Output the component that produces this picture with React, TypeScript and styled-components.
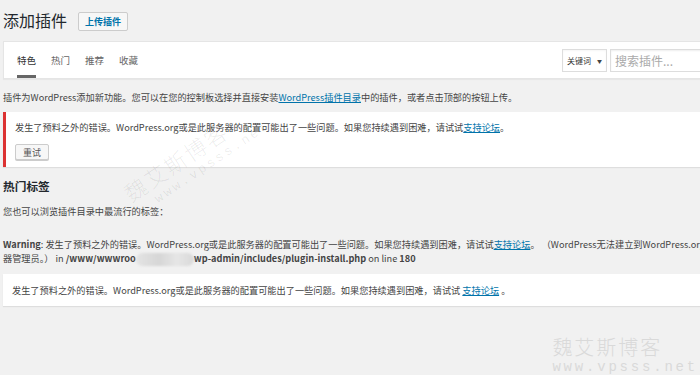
import styled, { createGlobalStyle } from "styled-components";

const GlobalStyle = createGlobalStyle`
  html, body {
    margin: 0;
    padding: 0;
    background: #f1f1f1;
  }
  body {
    font-family: "Noto Sans CJK SC", "Noto Sans", sans-serif;
    color: #444;
    font-size: 9.2px;
  }
  * { box-sizing: border-box; }
`;

const Page = styled.div`
  position: relative;
  width: 700px;
  height: 375px;
  overflow: hidden;
  padding-left: 3px;
`;

const Header = styled.div`
  display: flex;
  align-items: center;
  gap: 11px;
  height: 41px;
`;

const Title = styled.h1`
  margin: 0 0 1px;
  font-size: 16px;
  font-weight: 400;
  color: #23282d;
  line-height: 1;
`;

const UploadButton = styled.button`
  height: 19px;
  padding: 0 6px;
  border: 1px solid #ccc;
  border-radius: 2px;
  background: #f7f7f7;
  color: #0073aa;
  font-family: inherit;
  font-size: 9px;
  font-weight: 700;
  margin-top: 1px;
`;

const FilterBar = styled.div`
  display: flex;
  align-items: stretch;
  justify-content: space-between;
  height: 38px;
  margin-right: -20px;
  background: #fff;
  border: 1px solid #e5e5e5;
  box-shadow: 0 1px 1px rgba(0, 0, 0, 0.04);
`;

const Tabs = styled.ul`
  display: flex;
  gap: 15px;
  margin: 0;
  padding: 0 0 0 13px;
  list-style: none;
`;

const Tab = styled.li<{ $active?: boolean }>`
  display: flex;
  align-items: center;
  padding-top: 2px;
  font-size: 9.5px;
  color: ${(p) => (p.$active ? "#333" : "#666")};
  border-bottom: 3px solid ${(p) => (p.$active ? "#666" : "transparent")};
`;

const Search = styled.div`
  display: flex;
  align-items: center;
  gap: 3px;
`;

const Select = styled.div`
  display: flex;
  align-items: center;
  justify-content: space-between;
  height: 23px;
  width: 45px;
  padding: 0 4px 0 4px;
  border: 1px solid #ddd;
  font-size: 8px;
  color: #333;
  white-space: nowrap;
  box-shadow: inset 0 1px 2px rgba(0, 0, 0, 0.04);
`;

const Arrow = styled.span`
  font-size: 5px;
  color: #444;
`;

const SearchInput = styled.input`
  width: 109px;
  height: 23px;
  border: 1px solid #ddd;
  padding: 0 4px;
  font-family: inherit;
  font-size: 12px;
  box-shadow: inset 0 1px 2px rgba(0, 0, 0, 0.07);
  &::placeholder {
    color: #aaa;
  }
`;

const Text = styled.p`
  margin: 0;
  line-height: 14px;
  white-space: nowrap;
`;

const Intro = styled(Text)`
  margin-top: 11px;
`;

const Link = styled.a`
  color: #0073aa;
  text-decoration: underline;
`;

const Notice = styled.div<{ $error?: boolean }>`
  margin-right: -20px;
  background: #fff;
  border-left: ${(p) => (p.$error ? "3px solid #dc3232" : "none")};
  box-shadow: 0 1px 1px rgba(0, 0, 0, 0.08);
  padding: ${(p) => (p.$error ? "8px 0 7px 9px" : "9px 0 9px 9px")};
`;

const ErrorNotice = styled(Notice)`
  margin-top: 8px;
`;

const RetryButton = styled.button`
  margin-top: 10px;
  height: 16px;
  width: 34px;
  padding: 0;
  border: 1px solid #ccc;
  border-radius: 2px;
  background: #f7f7f7;
  color: #555;
  font-family: inherit;
  font-size: 9px;
  box-shadow: 0 1px 0 #ccc;
`;

const Heading = styled.h2`
  margin: 12px 0 0;
  font-size: 11.7px;
  font-weight: 700;
  color: #23282d;
  line-height: 14px;
`;

const TagHint = styled(Text)`
  margin-top: 11px;
`;

const Warning = styled.div`
  margin-top: 20px;
  line-height: 13.5px;
  color: #444;
  white-space: nowrap;
`;

const Blur = styled.span`
  display: inline-block;
  width: 58px;
  height: 13px;
  vertical-align: middle;
  border-radius: 7px;
  background: linear-gradient(90deg, #e4e4e4, #d6d6d6 40%, #e6e6e6 70%, #d9d9d9);
  filter: blur(1px);
`;

const BottomNotice = styled(Notice)`
  margin-top: 8px;
`;

const Watermark = styled.div`
  position: absolute;
  right: 2px;
  bottom: 2px;
  display: flex;
  flex-direction: column;
  gap: 4px;
  color: #d9d9d9;
  pointer-events: none;
`;

const WaterCn = styled.div<{ $size: number }>`
  font-family: "Noto Sans CJK SC", sans-serif;
  font-weight: 300;
  font-size: ${(p) => p.$size}px;
  letter-spacing: 2px;
  line-height: ${(p) => p.$size}px;
  white-space: nowrap;
`;

const WaterEn = styled.div<{ $size: number; $indent?: number }>`
  font-family: "Liberation Mono", monospace;
  font-size: ${(p) => p.$size}px;
  letter-spacing: ${(p) => p.$size * 0.2}px;
  line-height: 12px;
  margin-left: ${(p) => p.$indent ?? 0}px;
  white-space: nowrap;
`;

const Diagonal = styled.div`
  position: absolute;
  left: 116px;
  top: 150px;
  display: flex;
  flex-direction: column;
  gap: 5px;
  transform-origin: 60px 12px;
  transform: rotate(-34deg);
  color: rgba(0, 0, 0, 0.08);
  pointer-events: none;
`;

export default function App() {
  return (
    <>
      <GlobalStyle />
      <Page>
        <Header>
          <Title>添加插件</Title>
          <UploadButton>上传插件</UploadButton>
        </Header>
        <FilterBar>
          <Tabs>
            <Tab $active>特色</Tab>
            <Tab>热门</Tab>
            <Tab>推荐</Tab>
            <Tab>收藏</Tab>
          </Tabs>
          <Search>
            <Select>
              关键词<Arrow>▼</Arrow>
            </Select>
            <SearchInput placeholder="搜索插件..." />
          </Search>
        </FilterBar>
        <Intro>
          插件为WordPress添加新功能。您可以在您的控制板选择并直接安装
          <Link>WordPress插件目录</Link>中的插件，或者点击顶部的按钮上传。
        </Intro>
        <ErrorNotice $error>
          <Text>
            发生了预料之外的错误。WordPress.org或是此服务器的配置可能出了一些问题。如果您持续遇到困难，请试试
            <Link>支持论坛</Link>。
          </Text>
          <RetryButton>重试</RetryButton>
        </ErrorNotice>
        <Heading>热门标签</Heading>
        <TagHint>您也可以浏览插件目录中最流行的标签：</TagHint>
        <Warning>
          <b>Warning</b>:
          发生了预料之外的错误。WordPress.org或是此服务器的配置可能出了一些问题。如果您持续遇到困难，请试试
          <Link>支持论坛</Link>。 （WordPress无法建立到WordPress.org的服务器的安全连接。请联系您的服务
          <br />
          器管理员。） in <b>/www/wwwroo</b>
          <Blur />
          <b>wp-admin/includes/plugin-install.php</b> on line <b>180</b>
        </Warning>
        <BottomNotice>
          <Text>
            发生了预料之外的错误。WordPress.org或是此服务器的配置可能出了一些问题。如果您持续遇到困难，请试试{" "}
            <Link>支持论坛</Link> 。
          </Text>
        </BottomNotice>
        <Diagonal>
          <WaterCn $size={22}>魏艾斯博客</WaterCn>
          <WaterEn $size={13} $indent={22}>
            www.vpsss.net
          </WaterEn>
        </Diagonal>
        <Watermark>
          <WaterCn $size={20}>魏艾斯博客</WaterCn>
          <WaterEn $size={14}>www.vpsss.net</WaterEn>
        </Watermark>
      </Page>
    </>
  );
}
